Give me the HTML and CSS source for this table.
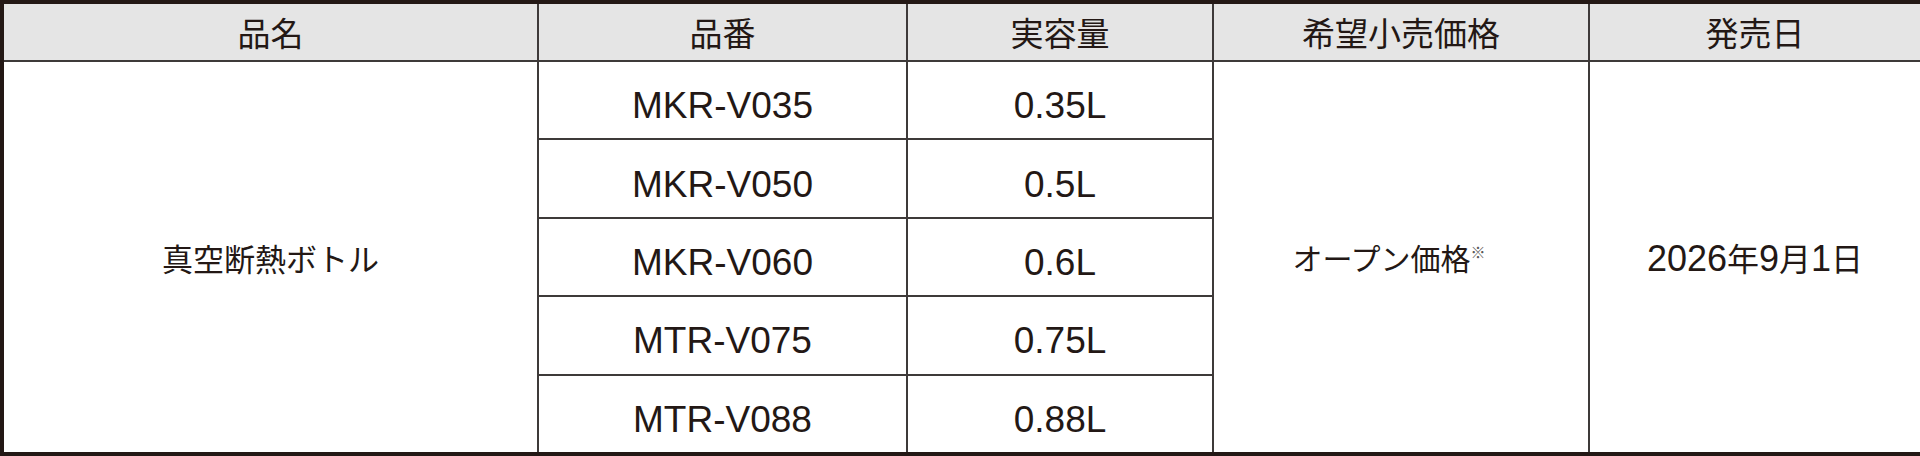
FILE: index.html
```html
<!DOCTYPE html>
<html lang="ja">
<head>
<meta charset="utf-8">
<link rel="stylesheet" href="styles.css">
</head>
<body>
<table class="spec">
  <colgroup>
    <col class="c1"><col class="c2"><col class="c3"><col class="c4"><col class="c5">
  </colgroup>
  <thead>
    <tr class="head">
      <th>品名</th><th>品番</th><th>実容量</th><th>希望小売価格</th><th>発売日</th>
    </tr>
  </thead>
  <tbody>
    <tr>
      <td rowspan="5" class="jp">真空断熱ボトル</td>
      <td class="num">MKR-V035</td><td class="num">0.35L</td>
      <td rowspan="5" class="price">オープン価格<span class="note">※</span></td>
      <td rowspan="5" class="date">2026<span class="kj">年</span>9<span class="kj">月</span>1<span class="kj">日</span></td>
    </tr>
    <tr><td class="num">MKR-V050</td><td class="num">0.5L</td></tr>
    <tr><td class="num">MKR-V060</td><td class="num">0.6L</td></tr>
    <tr><td class="num">MTR-V075</td><td class="num">0.75L</td></tr>
    <tr><td class="num">MTR-V088</td><td class="num">0.88L</td></tr>
  </tbody>
</table>
</body>
</html>
```

FILE: styles.css
```css
html, body {
  margin: 0;
  padding: 0;
  background: #ffffff;
}
body {
  font-family: "Liberation Sans", "Noto Sans CJK JP", sans-serif;
  color: #231815;
}
.spec {
  width: 1920px;
  height: 456px;
  border-collapse: collapse;
  table-layout: fixed;
  border: 4px solid #231815;
}
.c1 { width: 536px; }
.c2 { width: 369px; }
.c3 { width: 306px; }
.c4 { width: 376px; }
.c5 { width: 333px; }
.spec th, .spec td {
  border: 2px solid #3e3a39;
  text-align: center;
  vertical-align: middle;
  padding: 0;
  font-weight: 400;
}
.spec th {
  background: #e5e5e5;
  height: 56px;
  font-family: "Noto Sans CJK JP", sans-serif;
  font-size: 33px;
  line-height: 1;
}
.spec td {
  height: 76px;
}
.jp {
  font-family: "Noto Sans CJK JP", sans-serif;
  font-size: 31px;
}
.spec td.num {
  font-family: "Liberation Sans", "Noto Sans CJK JP", sans-serif;
  font-size: 37px;
  line-height: 42px;
  height: 64px;
  padding-top: 12px;
}
.spec td.price {
  font-family: "Noto Sans CJK JP", sans-serif;
  font-size: 30px;
  padding-right: 24px;
}
.date {
  font-family: "Liberation Sans", "Noto Sans CJK JP", sans-serif;
  font-size: 36px;
}
.kj {
  font-family: "Noto Sans CJK JP", sans-serif;
  font-size: 32px;
}
.note {
  font-size: 15px;
  vertical-align: 12px;
  color: #595757;
}
```
